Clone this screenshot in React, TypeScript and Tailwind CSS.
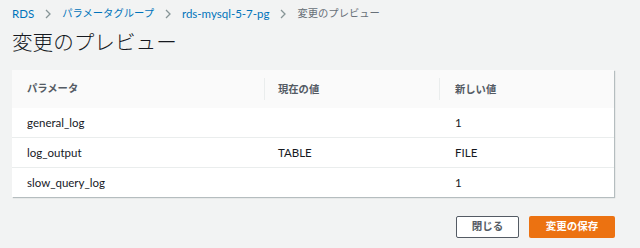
const rows = [
  { name: "general_log", current: "", next: "1" },
  { name: "log_output", current: "TABLE", next: "FILE" },
  { name: "slow_query_log", current: "", next: "1" },
];

function Chevron() {
  return (
    <svg width="8" height="10" viewBox="0 0 8 10" className="mx-[10px]">
      <path d="M2 1 L6 5 L2 9" fill="none" stroke="#879596" strokeWidth="1.3" />
    </svg>
  );
}

export default function App() {
  return (
    <div
      className="h-[248px] w-[640px] overflow-hidden bg-[#f2f3f3] px-3 text-[#16191f]"
      style={{ fontFamily: 'Lato, "Noto Sans CJK JP", sans-serif' }}
    >
      <nav className="flex h-[26px] items-center pt-[1px] text-[11.5px]">
        <span className="text-[#0073bb]">RDS</span>
        <Chevron />
        <span className="text-[10.3px] text-[#0073bb]">パラメータグループ</span>
        <Chevron />
        <span className="text-[#0073bb]">rds-mysql-5-7-pg</span>
        <Chevron />
        <span className="text-[10.3px] text-[#687078]">変更のプレビュー</span>
      </nav>
      <h1 className="mt-[1px] h-[43px] text-[20.6px] font-light leading-[30px]">変更のプレビュー</h1>
      <div className="w-[602px] bg-white shadow-[1px_1px_1px_rgba(0,28,36,0.25)]">
        <div className="grid h-[37px] grid-cols-[252px_175px_1fr] items-center bg-[#fafafa] text-[10.3px] font-bold text-[#545b64]">
          <div className="pl-[15px]">パラメータ</div>
          <div className="border-l border-[#eaeded] pl-[13px] leading-[22px]">現在の値</div>
          <div className="border-l border-[#eaeded] pl-[15px] leading-[22px]">新しい値</div>
        </div>
        {rows.map((r, i) => (
          <div
            key={r.name}
            className={
              "grid h-[30px] grid-cols-[252px_175px_1fr] items-center text-[11.5px] " +
              (i > 0 ? "border-t border-[#eaeded]" : "border-t border-[#fafafa]")
            }
          >
            <div className="pl-[15px]">{r.name}</div>
            <div className="pl-[14px]">{r.current}</div>
            <div className="pl-[16px]">{r.next}</div>
          </div>
        ))}
      </div>
      <div className="mt-[19px] flex justify-end gap-[10px] pr-[13px]">
        <button className="h-[22px] w-[63px] rounded-[2px] border border-[#545b64] bg-white text-[10.5px] font-bold text-[#545b64]">
          閉じる
        </button>
        <button className="h-[22px] w-[86px] rounded-[2px] bg-[#ec7211] text-[10.5px] font-bold text-white">
          変更の保存
        </button>
      </div>
    </div>
  );
}
